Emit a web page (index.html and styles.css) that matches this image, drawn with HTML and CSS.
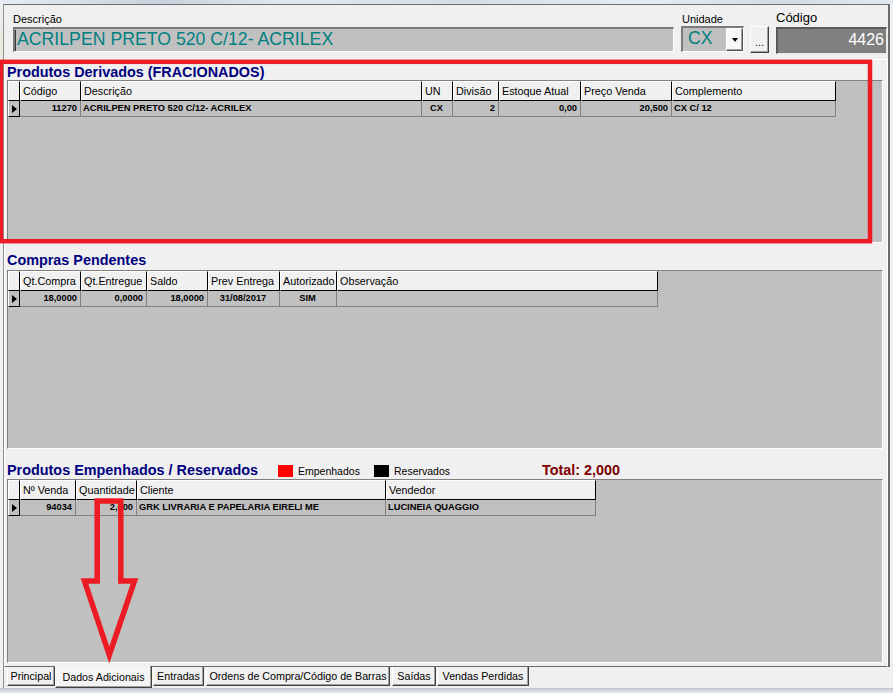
FILE: index.html
```html
<!DOCTYPE html>
<html lang="pt">
<head>
<meta charset="utf-8">
<title>Produto - Dados Adicionais</title>
<link rel="stylesheet" href="styles.css">
</head>
<body>
<div class="chrome-top"></div>
<div class="window">
  <div class="edge-left"></div>
  <div class="main">
    <div class="frame">
      <div class="head">
        <div class="field f-desc">
          <div class="lbl">Descrição</div>
          <div class="inp"><span class="caret"></span><span class="val">ACRILPEN PRETO 520 C/12- ACRILEX</span></div>
        </div>
        <div class="field f-unid">
          <div class="lbl lbl-unid">Unidade</div>
          <div class="combo"><span class="val">CX</span><span class="drop"><i class="tri-down"></i></span></div>
        </div>
        <div class="btn-dots">...</div>
        <div class="field f-cod">
          <div class="lbl lbl-lg">Código</div>
          <div class="codbox">4426</div>
        </div>
      </div>

      <div class="sheet">
        <div class="sec-title">Produtos Derivados (FRACIONADOS)</div>
        <div class="grid g1">
          <div class="row hrow">
            <div class="hc"></div>
            <div class="hc">Código</div>
            <div class="hc">Descrição</div>
            <div class="hc">UN</div>
            <div class="hc">Divisão</div>
            <div class="hc">Estoque Atual</div>
            <div class="hc">Preço Venda</div>
            <div class="hc">Complemento</div>
          </div>
          <div class="row drow">
            <div class="ind"><i class="tri-right"></i></div>
            <div class="dc r">11270</div>
            <div class="dc">ACRILPEN PRETO 520 C/12- ACRILEX</div>
            <div class="dc c">CX</div>
            <div class="dc r">2</div>
            <div class="dc r">0,00</div>
            <div class="dc r">20,500</div>
            <div class="dc">CX C/ 12</div>
          </div>
        </div>

        <div class="sec-title t2">Compras Pendentes</div>
        <div class="grid g2">
          <div class="row hrow">
            <div class="hc"></div>
            <div class="hc">Qt.Compra</div>
            <div class="hc">Qt.Entregue</div>
            <div class="hc">Saldo</div>
            <div class="hc">Prev Entrega</div>
            <div class="hc">Autorizado</div>
            <div class="hc">Observação</div>
          </div>
          <div class="row drow">
            <div class="ind"><i class="tri-right"></i></div>
            <div class="dc r">18,0000</div>
            <div class="dc r">0,0000</div>
            <div class="dc r">18,0000</div>
            <div class="dc c">31/08/2017</div>
            <div class="dc c">SIM</div>
            <div class="dc"></div>
          </div>
        </div>

        <div class="sec-row">
          <div class="sec-title t3">Produtos Empenhados / Reservados</div>
          <span class="sq sq-red"></span><span class="lg-text lg-1">Empenhados</span>
          <span class="sq sq-black"></span><span class="lg-text lg-2">Reservados</span>
          <span class="total">Total: 2,000</span>
        </div>
        <div class="grid g3">
          <div class="row hrow">
            <div class="hc"></div>
            <div class="hc">Nº Venda</div>
            <div class="hc">Quantidade</div>
            <div class="hc">Cliente</div>
            <div class="hc">Vendedor</div>
          </div>
          <div class="row drow">
            <div class="ind"><i class="tri-right"></i></div>
            <div class="dc r">94034</div>
            <div class="dc r">2,000</div>
            <div class="dc">GRK LIVRARIA E PAPELARIA EIRELI ME</div>
            <div class="dc">LUCINEIA QUAGGIO</div>
          </div>
        </div>
      </div>
    </div>

    <div class="tabs">
      <div class="tab w-princ">Principal</div>
      <div class="tab tab-sel w-dados">Dados Adicionais</div>
      <div class="tab w-entr">Entradas</div>
      <div class="tab w-ord">Ordens de Compra/Código de Barras</div>
      <div class="tab w-sai">Saídas</div>
      <div class="tab w-vend">Vendas Perdidas</div>
    </div>
  </div>
  <div class="edge-right"></div>
</div>
<div class="chrome-bottom"></div>

<svg class="overlay" width="893" height="693" viewBox="0 0 893 693">
  <rect x="1" y="61.8" width="869" height="179.4" fill="none" stroke="#ed1c24" stroke-width="4.5"/>
  <path d="M97.2 501 H120.8 V581 H134.5 L109.3 655 L84.5 581 H97.2 Z" fill="none" stroke="#ed1c24" stroke-width="5.5" stroke-linejoin="miter"/>
</svg>
</body>
</html>
```

FILE: styles.css
```css
* { box-sizing: border-box; }
html, body { margin: 0; padding: 0; }
body {
  width: 893px;
  height: 693px;
  overflow: hidden;
  position: relative;
  background: #f0f0f0;
  font-family: "Liberation Sans", Arial, sans-serif;
  font-size: 11px;
  color: #000;
}

/* blurred window chrome around the form */
.chrome-top {
  height: 4px;
  background: linear-gradient(90deg, #e8edf2 0%, #d8e0e9 8%, #c8d2de 18%, #e2e8ee 32%, #d4dde7 52%, #e7ecf1 72%, #d2dbe5 88%, #e4e9ef 100%);
}
.window { display: flex; height: 684px; }
.edge-left {
  width: 3px;
  background: linear-gradient(#eef0f2, #ece9df 40px, #eef0f2 90px, #eef0f2);
}
.edge-right { width: 3px; background: #eef1f4; }
.main {
  width: 887px;
  border-left: 1px solid #8e8e8e;
  display: flex;
  flex-direction: column;
}
.chrome-bottom {
  height: 5px;
  background: linear-gradient(#bfc4ca, #d9dde2 60%, #e6e9ec);
}

.frame {
  border-top: 1px solid #6d6d6d;
  border-right: 2px solid #6d6d6d;
}

/* header fields */
.head {
  height: 54px;
  display: flex;
  align-items: flex-start;
  padding: 6px 0 0 9px;
}
.field { display: flex; flex-direction: column; }
.lbl { height: 16px; line-height: 16px; font-size: 11px; white-space: nowrap; }
.lbl-unid { padding-left: 1px; }
.lbl-lg { font-size: 13px; line-height: 14px; }
.f-desc { width: 661px; margin-right: 7px; }
.f-unid { width: 63px; margin-right: 6px; }
.f-cod { width: 111px; margin-left: 7px; }

.inp {
  height: 25px;
  background: #c0c0c0;
  border-top: 2px solid #7a7a7a;
  border-left: 2px solid #7a7a7a;
  border-bottom: 1px solid #fff;
  border-right: 1px solid #fff;
  display: flex;
  align-items: flex-start;
  overflow: hidden;
}
.caret {
  width: 1px;
  height: 21px;
  background: #3c3c3c;
  margin: 1px 1px 0 0;
}
.val {
  color: #008080;
  font-size: 17.7px;
  line-height: 20px;
  white-space: nowrap;
}
.combo {
  height: 26px;
  margin-top: -1px;
  background: #c0c0c0;
  border-top: 2px solid #7a7a7a;
  border-left: 2px solid #7a7a7a;
  border-bottom: 1px solid #fff;
  border-right: 1px solid #fff;
  display: flex;
  justify-content: space-between;
  align-items: flex-start;
  padding-left: 5px;
}
.combo .val { line-height: 21px; }
.drop {
  width: 17px;
  height: 23px;
  background: #f7f7f7;
  border: 1px solid;
  border-color: #fff #555 #555 #fff;
  box-shadow: inset -1px -1px 0 #a0a0a0;
  display: flex;
  align-items: center;
  justify-content: center;
}
.tri-down {
  width: 0; height: 0;
  border-top: 4px solid #000;
  border-left: 3.5px solid transparent;
  border-right: 3.5px solid transparent;
}
.btn-dots {
  width: 19px;
  height: 27px;
  margin-top: 15px;
  background: #f0f0f0;
  border: 1px solid;
  border-color: #fff #404040 #404040 #fff;
  box-shadow: inset -1px -1px 0 #a0a0a0;
  display: flex;
  align-items: flex-end;
  justify-content: center;
  line-height: 11px;
  padding-bottom: 4px;
  font-size: 11px;
}
.codbox {
  height: 27px;
  background: #808080;
  border-top: 2px solid #5a5a5a;
  border-left: 2px solid #5a5a5a;
  border-bottom: 1px solid #e8e8e8;
  border-right: 1px solid #e8e8e8;
  color: #fff;
  font-size: 16px;
  line-height: 21px;
  text-align: right;
  padding-right: 2px;
}

/* tab sheet */
.sheet {
  height: 608px;
  border-top: 1px solid #fff;
  border-left: 1px solid #fff;
  border-right: 1px solid #fff;
  border-bottom: 1px solid #696969;
  padding: 4px 4px 3px 2px;
}
.sec-title {
  height: 16px;
  line-height: 16px;
  font-weight: bold;
  font-size: 14.4px;
  color: #000080;
  white-space: nowrap;
}
.t2 { margin-top: 9px; margin-bottom: 2px; }
.sec-row {
  display: flex;
  align-items: center;
  height: 16px;
  margin-top: 13px;
  margin-bottom: 1px;
}
.t3 { width: 271px; }
.sq { width: 15px; height: 12px; margin-right: 5px; margin-top: 2px; }
.sq-red { background: #ff0000; }
.sq-black { background: #000; }
.lg-text { font-size: 10.5px; line-height: 16px; padding-top: 2px; white-space: nowrap; }
.lg-1 { width: 76px; }
.lg-2 { width: 148px; }
.total {
  font-weight: bold;
  font-size: 14.4px;
  color: #800000;
  line-height: 16px;
  white-space: nowrap;
}

/* data grids */
.grid {
  background: #c0c0c0;
  border: 1px solid;
  border-color: #808080 #fff #fff #808080;
  overflow: hidden;
}
.g1 { height: 163px; }
.g2 { height: 179px; }
.g3 { height: 184px; }
.row { display: grid; }
.g1 .row { grid-template-columns: 12px 61px 341px 31px 46px 82px 91px 164px; }
.g2 .row { grid-template-columns: 12px 61px 66px 61px 72px 57px 321px; }
.g3 .row { grid-template-columns: 12px 56px 61px 249px 210px; }

.hrow { height: 20px; }
.hc {
  background: #f0f0f0;
  border-top: 1px solid #fff;
  border-left: 1px solid #fff;
  border-right: 1px solid #000;
  border-bottom: 1px solid #000;
  font-size: 10.8px;
  line-height: 18px;
  padding-left: 2px;
  white-space: nowrap;
  overflow: hidden;
}
.drow { height: 16px; }
.dc {
  border-right: 1px solid #808080;
  border-bottom: 1px solid #808080;
  font-weight: bold;
  font-size: 9.3px;
  line-height: 15px;
  padding: 0 3px 0 2px;
  white-space: nowrap;
  overflow: hidden;
}
.dc.r { text-align: right; }
.dc.c { text-align: center; }
.ind {
  border-left: 1px solid #fff;
  border-right: 1px solid #000;
  border-bottom: 1px solid #000;
  display: flex;
  align-items: center;
  padding-left: 3px;
}
.tri-right {
  width: 0; height: 0;
  border-left: 5px solid #000;
  border-top: 4.5px solid transparent;
  border-bottom: 4.5px solid transparent;
}

/* tabs at the bottom */
.tabs {
  height: 21px;
  display: flex;
  align-items: flex-start;
  padding-left: 3px;
}
.tab {
  height: 19px;
  background: #f0f0f0;
  border-left: 1px solid #fff;
  border-right: 1px solid #404040;
  border-bottom: 1px solid #404040;
  box-shadow: inset -1px -1px 0 #a0a0a0;
  font-size: 10.7px;
  line-height: 18px;
  text-align: center;
  white-space: nowrap;
}
.tab-sel {
  position: relative;
  z-index: 1;
  height: 22px;
  margin-top: -1px;
  line-height: 23px;
  background: #f4f4f4;
}
.w-princ { width: 48px; }
.w-dados { width: 97px; }
.w-entr { width: 51px; margin-left: 1px; }
.w-ord { width: 184px; margin-left: 2px; }
.w-sai { width: 44px; margin-left: 2px; }
.w-vend { width: 92px; margin-left: 1px; }

/* red annotation overlay */
.overlay {
  position: absolute;
  top: 0;
  left: 0;
  z-index: 10;
  pointer-events: none;
}
```
